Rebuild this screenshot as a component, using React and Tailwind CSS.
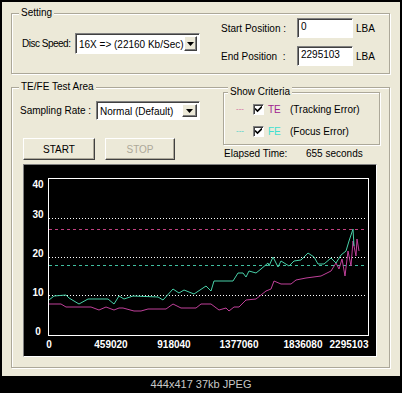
import React from "react";

const teal = [
  [25, 135], [30, 131], [42, 130], [45, 133], [55, 139], [64, 134], [84, 134], [90, 139], [95, 131], [100, 134],
  [109, 131], [134, 132], [139, 135], [149, 124], [155, 128], [160, 125], [170, 129], [182, 121], [187, 126],
  [190, 116], [209, 116], [214, 108], [219, 108], [222, 112], [225, 106], [232, 108], [237, 104], [244, 98],
  [245, 101], [249, 92], [254, 102], [257, 96], [265, 101], [270, 96], [277, 95], [284, 88], [290, 92], [294, 99],
  [300, 99], [307, 93], [312, 98], [317, 90], [322, 86], [325, 76], [329, 64], [330, 81],
];

const pink = [
  [25, 139], [37, 139], [42, 142], [67, 142], [75, 145], [82, 142], [90, 145], [95, 143], [99, 143], [110, 146],
  [117, 146], [124, 144], [142, 144], [149, 139], [157, 143], [172, 143], [177, 139], [187, 139], [195, 145],
  [202, 143], [205, 146], [210, 142], [215, 142], [222, 135], [232, 134], [242, 126], [247, 124], [250, 116],
  [257, 119], [267, 119], [272, 115], [282, 113], [297, 111], [307, 106], [312, 98], [315, 104], [318, 94],
  [321, 111], [324, 86], [327, 101], [329, 76], [332, 91], [333, 74], [335, 86],
];

const yLabels = [
  ["40", 19],
  ["30", 49],
  ["20", 88],
  ["10", 127],
  ["0", 166],
];

const xLabels = [
  ["0", 25],
  ["459020", 87],
  ["918040", 150],
  ["1377060", 215],
  ["1836080", 279],
  ["2295103", 325],
];

const toPts = (arr) => arr.map(([x, y]) => `${x},${y}`).join(" ");

const GroupBox = ({ label, labelLeft, className, children }) => (
  <div
    className={`relative border border-[#aca899] shadow-[inset_1px_1px_0_#fff,1px_1px_0_#fff] ${className}`}
  >
    <span
      className={`absolute top-[-7px] bg-[#ece9d8] px-[2px] leading-[12px] ${labelLeft}`}
    >
      {label}
    </span>
    {children}
  </div>
);

const Select = ({ value, className }) => (
  <div
    className={`flex items-center bg-white border-t border-l border-[#808080] border-b border-r border-b-white border-r-white shadow-[inset_1px_1px_0_#404040] ${className}`}
  >
    <span className="flex-1 pl-[3px] pt-[1px] text-black whitespace-nowrap">{value}</span>
    <div className="w-[15px] h-[calc(100%-4px)] mr-[2px] flex items-center justify-center bg-[#ece9d8] border-t border-l border-white border-b border-r border-b-[#404040] border-r-[#404040] shadow-[inset_-1px_-1px_0_#808080]">
      <svg width="7" height="4" viewBox="0 0 7 4">
        <path d="M0 0h7L3.5 4z" fill="#000" />
      </svg>
    </div>
  </div>
);

const Input = ({ value }) => (
  <div className="w-[56px] h-[20px] bg-white border-t border-l border-[#808080] border-b border-r border-b-white border-r-white shadow-[inset_1px_1px_0_#404040] pl-[3px] pt-[2px] leading-[12px]">
    {value}
  </div>
);

const Check = () => (
  <div className="w-[11px] h-[11px] bg-white border-t border-l border-[#808080] border-b border-r border-b-white border-r-white shadow-[inset_1px_1px_0_#404040] flex items-center justify-center">
    <svg width="7" height="7" viewBox="0 0 7 7">
      <path d="M0 2.5l2.5 2.5L7 0.5" stroke="#000" strokeWidth="1.6" fill="none" />
    </svg>
  </div>
);

const Button = ({ text, disabled, className }) => (
  <div
    className={`h-[22px] flex items-center justify-center bg-[#ece9d8] border-t border-l border-white border-b border-r border-b-[#404040] border-r-[#404040] shadow-[inset_-1px_-1px_0_#aca899] ${
      disabled ? "text-[#aca899]" : "text-black"
    } ${className}`}
  >
    {text}
  </div>
);

export default function App() {
  return (
    <div className="w-[402px] h-[393px] bg-black pt-[2px] px-[2px] font-['Liberation_Sans',Arial,sans-serif] text-[10px] text-black">
      <div className="w-[398px] h-[374px] bg-[#ece9d8] pt-[11px] pl-[9px]">
        {/* Setting */}
        <GroupBox label="Setting" labelLeft="left-[7px]" className="w-[379px] h-[61px] flex items-start">
          <div className="flex items-center pl-[10px] self-center">
            <span className="w-[53px] whitespace-nowrap tracking-[-0.5px]">Disc Speed:</span>
            <Select value="16X => (22160 Kb/Sec)" className="w-[125px] h-[21px]" />
          </div>
          <div className="flex flex-col gap-[8px] pt-[4px] ml-[21px]">
            <div className="flex items-center">
              <span className="w-[76px] whitespace-nowrap">Start Position :</span>
              <Input value="0" />
              <span className="ml-[3px]">LBA</span>
            </div>
            <div className="flex items-center">
              <span className="w-[76px] whitespace-nowrap">End Position&nbsp; :</span>
              <Input value="2295103" />
              <span className="ml-[3px]">LBA</span>
            </div>
          </div>
        </GroupBox>

        {/* TE/FE */}
        <GroupBox label="TE/FE Test Area" labelLeft="left-[7px]" className="w-[379px] h-[281px] mt-[13px]">
          <div className="flex h-[76px]">
            <div className="w-[200px] pl-[8px] pt-[13px]">
              <div className="flex items-center">
                <span className="w-[76px] whitespace-nowrap">Sampling Rate :</span>
                <Select value="Normal (Default)" className="w-[104px] h-[19px]" />
              </div>
              <div className="flex mt-[18px] ml-[3px] gap-[10px]">
                <Button text="START" className="w-[72px]" />
                <Button text="STOP" disabled className="w-[70px]" />
              </div>
            </div>
            <div className="ml-[11px] pt-[4px]">
              <GroupBox label="Show Criteria" labelLeft="left-[4px]" className="w-[157px] h-[53px] pt-[10px] pl-[12px]">
                <div className="flex items-center h-[12px]">
                  <span className="w-[17px] text-[8px] text-[#d0609a] leading-none">---</span>
                  <Check />
                  <span className="ml-[4px] w-[22px] text-[#a0208f]">TE</span>
                  <span>(Tracking Error)</span>
                </div>
                <div className="flex items-center h-[12px] mt-[10px]">
                  <span className="w-[17px] text-[8px] text-[#40d0c8] leading-none">---</span>
                  <Check />
                  <span className="ml-[4px] w-[22px] text-[#40e0d0]">FE</span>
                  <span>(Focus Error)</span>
                </div>
              </GroupBox>
              <div className="flex mt-[3px] pl-[1px] leading-[12px]">
                <span className="w-[82px]">Elapsed Time:</span>
                <span>655 seconds</span>
              </div>
            </div>
          </div>
          <div className="ml-[11px] w-[354px] h-[193px] bg-black border-t border-l border-[#808080] border-b border-r border-b-white border-r-white">
            <svg width="352" height="191" viewBox="0 0 352 191" className="block">
              <rect x="24.5" y="13.5" width="320" height="157" fill="none" stroke="#fff" />
              <line x1="25" y1="53.5" x2="341" y2="53.5" stroke="#fff" strokeDasharray="1 2" />
              <line x1="25" y1="64.5" x2="341" y2="64.5" stroke="#c04080" strokeDasharray="3 3" />
              <line x1="25" y1="92.5" x2="341" y2="92.5" stroke="#fff" strokeDasharray="1 2" />
              <line x1="25" y1="100.5" x2="341" y2="100.5" stroke="#40c0a0" strokeDasharray="3 3" />
              <line x1="25" y1="130.5" x2="341" y2="130.5" stroke="#fff" strokeDasharray="1 2" />
              <polyline points={toPts(pink)} fill="none" stroke="#c0409a" strokeWidth="1" />
              <polyline points={toPts(teal)} fill="none" stroke="#48d0a8" strokeWidth="1" />
              {yLabels.map(([t, y]) => (
                <text key={t} x="14" y={y + 4} textAnchor="middle" fill="#fff" fontSize="10" fontWeight="bold" fontFamily="Liberation Sans, Arial, sans-serif">
                  {t}
                </text>
              ))}
              {xLabels.map(([t, x]) => (
                <text key={t} x={x} y="183" textAnchor="middle" fill="#fff" fontSize="10" fontWeight="bold" fontFamily="Liberation Sans, Arial, sans-serif">
                  {t}
                </text>
              ))}
            </svg>
          </div>
        </GroupBox>
      </div>
      <div className="h-[17px] flex items-center justify-center text-[11px] text-[#c8c8c8]">
        444x417 37kb JPEG
      </div>
    </div>
  );
}
